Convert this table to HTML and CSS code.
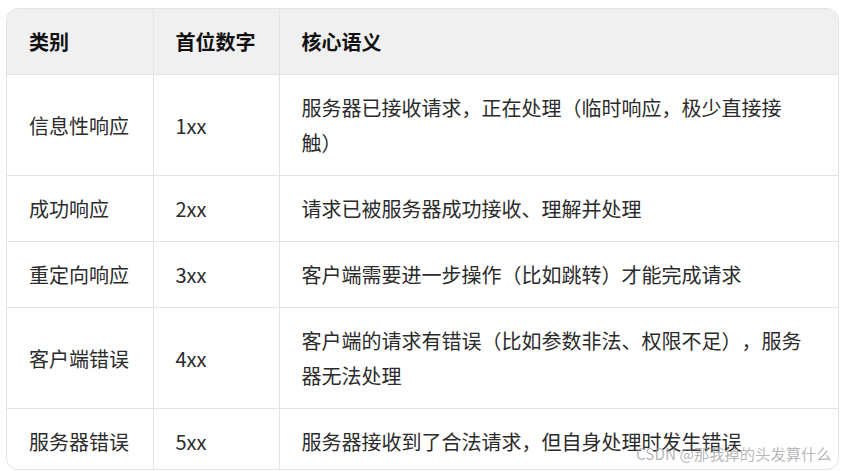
FILE: index.html
```html
<!DOCTYPE html>
<html lang="zh-CN">
<head>
<meta charset="utf-8">
<link rel="stylesheet" href="styles.css">
</head>
<body>
<div class="wrap">
  <table class="tbl">
    <colgroup>
      <col class="c1">
      <col class="c2">
      <col class="c3">
    </colgroup>
    <thead>
      <tr><th>类别</th><th>首位数字</th><th>核心语义</th></tr>
    </thead>
    <tbody>
      <tr><td>信息性响应</td><td>1xx</td><td>服务器已接收请求，正在处理（临时响应，极少直接接触）</td></tr>
      <tr><td>成功响应</td><td>2xx</td><td>请求已被服务器成功接收、理解并处理</td></tr>
      <tr><td>重定向响应</td><td>3xx</td><td>客户端需要进一步操作（比如跳转）才能完成请求</td></tr>
      <tr><td>客户端错误</td><td>4xx</td><td>客户端的请求有错误（比如参数非法、权限不足），服务器无法处理</td></tr>
      <tr><td>服务器错误</td><td>5xx</td><td>服务器接收到了合法请求，但自身处理时发生错误</td></tr>
    </tbody>
  </table>
</div>
<div class="watermark">CSDN @那我掉的头发算什么</div>
</body>
</html>
```
FILE: styles.css
```css
html, body {
  margin: 0;
  padding: 0;
  background: #ffffff;
}
body {
  font-family: "Noto Sans CJK SC", "Noto Sans", sans-serif;
  width: 843px;
  height: 471px;
  overflow: hidden;
  position: relative;
  text-spacing-trim: space-all;
}
.wrap {
  margin: 8px 4px 0 6px;
  height: 462px;
  box-sizing: border-box;
  border: 1px solid #e3e3e3;
  border-radius: 12px;
  overflow: hidden;
}
.tbl {
  width: 100%;
  border-collapse: collapse;
  table-layout: fixed;
  font-size: 20px;
  line-height: 35px;
  color: #2b2b2b;
  text-spacing-trim: space-all;
}
.c1 { width: 146px; }
.c2 { width: 126px; }
.tbl th,
.tbl td {
  padding: 15px 22px;
  text-align: left;
  vertical-align: middle;
  border-right: 1px solid #e3e3e3;
  border-bottom: 1px solid #e3e3e3;
}
.tbl th:last-child,
.tbl td:last-child {
  border-right: none;
}
.tbl th {
  background: #f0f0f0;
  font-weight: 700;
  color: #111111;
}
.watermark {
  position: absolute;
  left: 636px;
  top: 442px;
  font-size: 15.3px;
  line-height: 22px;
  color: rgba(160, 160, 160, 0.75);
  white-space: nowrap;
  text-spacing-trim: space-all;
}
```
